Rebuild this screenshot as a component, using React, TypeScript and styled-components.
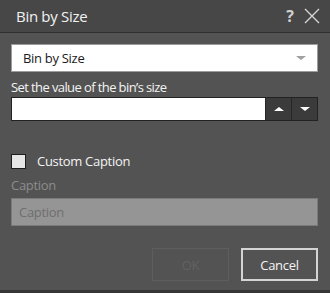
import React from "react";
import styled, { createGlobalStyle } from "styled-components";

const Global = createGlobalStyle`
  html, body { margin: 0; padding: 0; background: #535353; }
  body { font-family: "Open Sans", "Noto Sans", sans-serif; }
`;

const Dialog = styled.div`
  width: 330px;
  height: 293px;
  box-sizing: border-box;
  background: #535353;
  border-bottom: 3px solid #363636;
  display: flex;
  flex-direction: column;
`;

const TitleBar = styled.div`
  height: 33px;
  box-sizing: border-box;
  background: #474747;
  border-bottom: 1px solid #2f2f2f;
  display: flex;
  align-items: center;
  padding: 0 10px 0 16px;
`;

const Title = styled.div`
  flex: 1;
  color: #f2f2f2;
  font-size: 15px;
  letter-spacing: -0.3px;
`;

const TitleIcons = styled.div`
  display: flex;
  align-items: center;
  gap: 10px;
  color: #d8d8d8;
`;

const Help = styled.span`
  font-size: 16px;
  font-weight: 700;
  color: #d0d0d0;
`;

const Body = styled.div`
  flex: 1;
  display: flex;
  flex-direction: column;
  padding: 11px 12px 0 11px;
`;

const Select = styled.div`
  height: 28px;
  box-sizing: border-box;
  background: #ffffff;
  border: 1px solid #9c9c9c;
  display: flex;
  align-items: center;
  justify-content: space-between;
  padding: 0 11px 0 11px;
  font-size: 13px;
  letter-spacing: -0.3px;
  color: #1a1a1a;
`;

const Arrow = styled.span<{ $color: string; $up?: boolean }>`
  width: 0;
  height: 0;
  border-left: 5px solid transparent;
  border-right: 5px solid transparent;
  ${(p) =>
    p.$up
      ? `border-bottom: 4px solid ${p.$color};`
      : `border-top: 4px solid ${p.$color};`}
`;

const FieldLabel = styled.div<{ $muted?: boolean }>`
  font-size: 13px;
  letter-spacing: ${(p) => (p.$muted ? "-0.3px" : "-0.6px")};
  line-height: 18px;
  color: ${(p) => (p.$muted ? "#8c8c8c" : "#f4f4f4")};
  margin-top: 6px;
`;

const Spinner = styled.div`
  margin-top: 1px;
  height: 24px;
  box-sizing: border-box;
  border: 1px solid #222222;
  display: flex;
`;

const SpinInput = styled.div`
  flex: 1;
  background: #ffffff;
`;

const SpinButton = styled.div`
  width: 25px;
  background: #3b3b3b;
  border-left: 1px solid #262626;
  display: flex;
  align-items: center;
  justify-content: center;
`;

const CheckRow = styled.div`
  margin-top: 31px;
  display: flex;
  align-items: center;
  gap: 11px;
  font-size: 13px;
  letter-spacing: -0.3px;
  color: #f4f4f4;
`;

const Box = styled.div`
  width: 15px;
  height: 15px;
  box-sizing: border-box;
  border: 1px solid #1e1e1e;
  background: #e6e6e6;
`;

const CaptionInput = styled.div`
  margin-top: 4px;
  height: 28px;
  box-sizing: border-box;
  background: #959595;
  border: 1px solid #7a7a7a;
  display: flex;
  align-items: center;
  padding-left: 7px;
  font-size: 13px;
  letter-spacing: -0.3px;
  color: #6f6f6f;
`;

const Buttons = styled.div`
  margin-top: 22px;
  display: flex;
  justify-content: flex-end;
  gap: 12px;
`;

const Button = styled.div<{ $disabled?: boolean }>`
  width: 77px;
  height: 33px;
  box-sizing: border-box;
  display: flex;
  align-items: center;
  justify-content: center;
  font-size: 13px;
  letter-spacing: -0.3px;
  border: ${(p) => (p.$disabled ? "1px solid #5e5e5e" : "2px solid #d4d4d4")};
  color: ${(p) => (p.$disabled ? "#626262" : "#f4f4f4")};
`;

export default function App() {
  return (
    <>
      <Global />
      <Dialog>
        <TitleBar>
          <Title>Bin by Size</Title>
          <TitleIcons>
            <Help>?</Help>
            <svg width="16" height="16" viewBox="0 0 16 16">
              <path d="M1 1 L15 15 M15 1 L1 15" stroke="#d8d8d8" strokeWidth="1.3" />
            </svg>
          </TitleIcons>
        </TitleBar>
        <Body>
          <Select>
            <span>Bin by Size</span>
            <Arrow $color="#a0a0a0" />
          </Select>
          <FieldLabel>Set the value of the bin’s size</FieldLabel>
          <Spinner>
            <SpinInput />
            <SpinButton>
              <Arrow $color="#ffffff" $up />
            </SpinButton>
            <SpinButton>
              <Arrow $color="#ffffff" />
            </SpinButton>
          </Spinner>
          <CheckRow>
            <Box />
            <span>Custom Caption</span>
          </CheckRow>
          <FieldLabel $muted>Caption</FieldLabel>
          <CaptionInput>Caption</CaptionInput>
          <Buttons>
            <Button $disabled>OK</Button>
            <Button>Cancel</Button>
          </Buttons>
        </Body>
      </Dialog>
    </>
  );
}
